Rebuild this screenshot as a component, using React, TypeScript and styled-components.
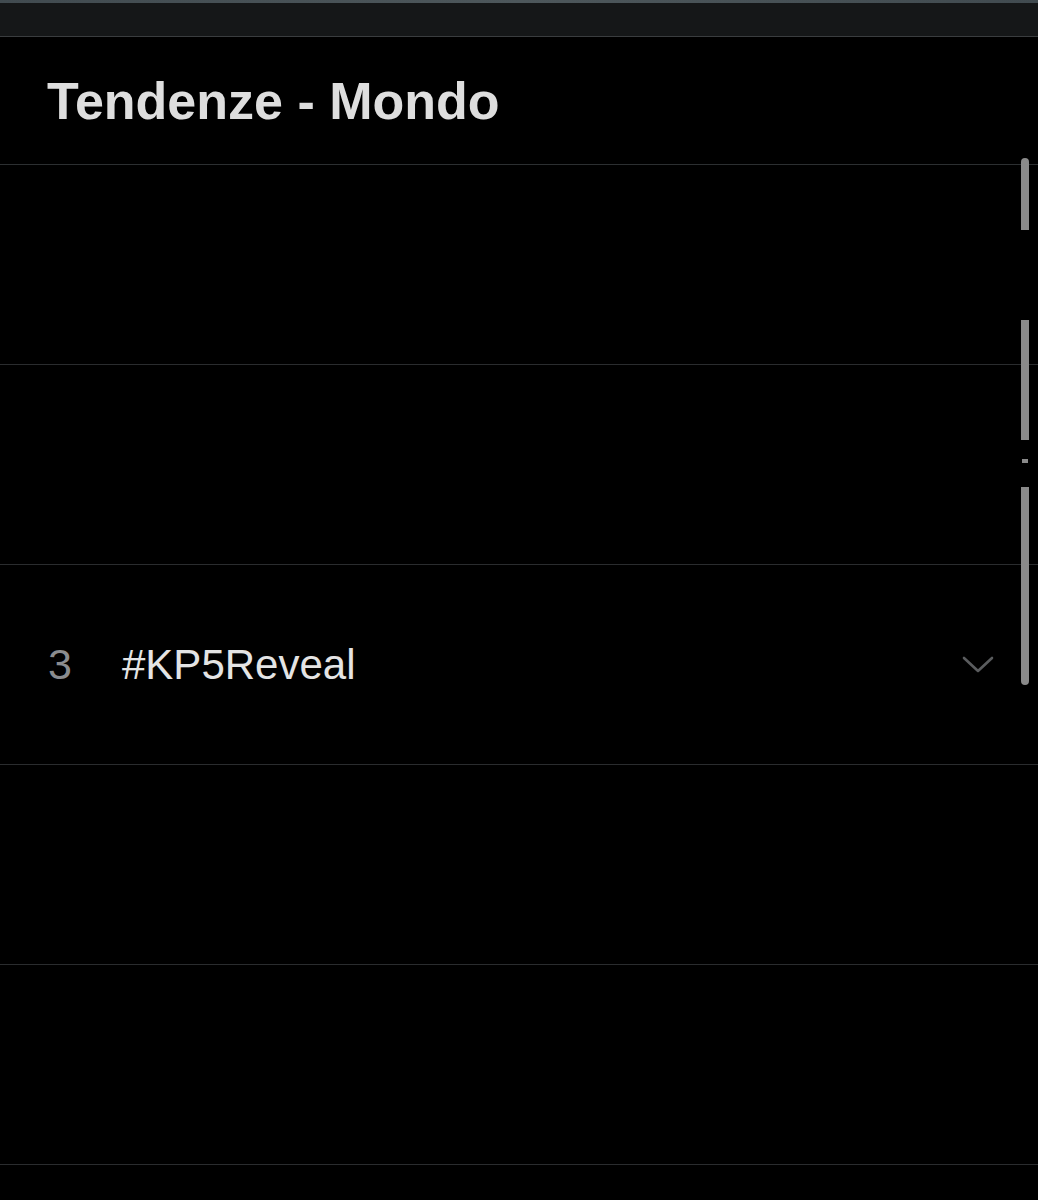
import React from "react";
import styled, { createGlobalStyle } from "styled-components";

const Global = createGlobalStyle`
  *, *::before, *::after { box-sizing: border-box; }
  html, body { margin: 0; padding: 0; background: #000; }
  body { font-family: "Liberation Sans", Arial, sans-serif; }
`;

const Page = styled.div`
  position: relative;
  width: 1038px;
  height: 1200px;
  overflow: hidden;
  background: #000;
`;

const TopStrip = styled.div`
  height: 3px;
  background: linear-gradient(90deg, #414b50, #4d575b 50%, #414b50);
`;

const NavBar = styled.div`
  height: 34px;
  background: #151718;
  border-bottom: 1px solid #3a3d3f;
`;

const Header = styled.div`
  height: 128px;
  display: flex;
  align-items: center;
  padding-left: 47px;
  border-bottom: 1px solid #2c2f31;
`;

const Title = styled.h1`
  margin: 0;
  font-size: 52px;
  font-weight: 700;
  color: #dedede;
`;

const Row = styled.div`
  height: 200px;
  display: flex;
  align-items: center;
  border-bottom: 1px solid #2a2c2e;
  padding: 0 44px 0 48px;
`;

const Rank = styled.span`
  width: 74px;
  font-size: 43px;
  color: #8a8c8f;
`;

const Tag = styled.span`
  flex: 1;
  font-size: 42px;
  color: #e4e4e4;
`;

const Chevron = styled.svg`
  width: 32px;
  height: 18px;
`;

const ScrollTrack = styled.div`
  position: absolute;
  top: 158px;
  right: 9px;
  width: 8px;
  display: flex;
  flex-direction: column;
  align-items: center;
`;

const Thumb = styled.div<{ $h: number; $gap: number; $w?: number; $top?: boolean; $bottom?: boolean }>`
  width: ${(p) => p.$w ?? 8}px;
  height: ${(p) => p.$h}px;
  margin-top: ${(p) => p.$gap}px;
  background: #8a8a8a;
  border-radius: ${(p) => (p.$top ? "4px 4px 0 0" : p.$bottom ? "0 0 4px 4px" : "0")};
`;

const rows = [null, null, { rank: "3", tag: "#KP5Reveal" }, null, null, null];

const thumbs = [
  { h: 72, gap: 0, top: true },
  { h: 120, gap: 90 },
  { h: 4, gap: 19, w: 6 },
  { h: 198, gap: 24, bottom: true },
];

export default function App() {
  return (
    <Page>
      <Global />
      <TopStrip />
      <NavBar />
      <Header>
        <Title>Tendenze - Mondo</Title>
      </Header>
      {rows.map((r, i) => (
        <Row key={i}>
          {r && (
            <>
              <Rank>{r.rank}</Rank>
              <Tag>{r.tag}</Tag>
              <Chevron viewBox="0 0 32 18">
                <path d="M2 2 L16 15 L30 2" fill="none" stroke="#5a5c5e" strokeWidth="2.6" strokeLinecap="round" strokeLinejoin="round" />
              </Chevron>
            </>
          )}
        </Row>
      ))}
      <ScrollTrack>
        {thumbs.map((t, i) => (
          <Thumb key={i} $h={t.h} $gap={t.gap} $w={t.w} $top={t.top} $bottom={t.bottom} />
        ))}
      </ScrollTrack>
    </Page>
  );
}
